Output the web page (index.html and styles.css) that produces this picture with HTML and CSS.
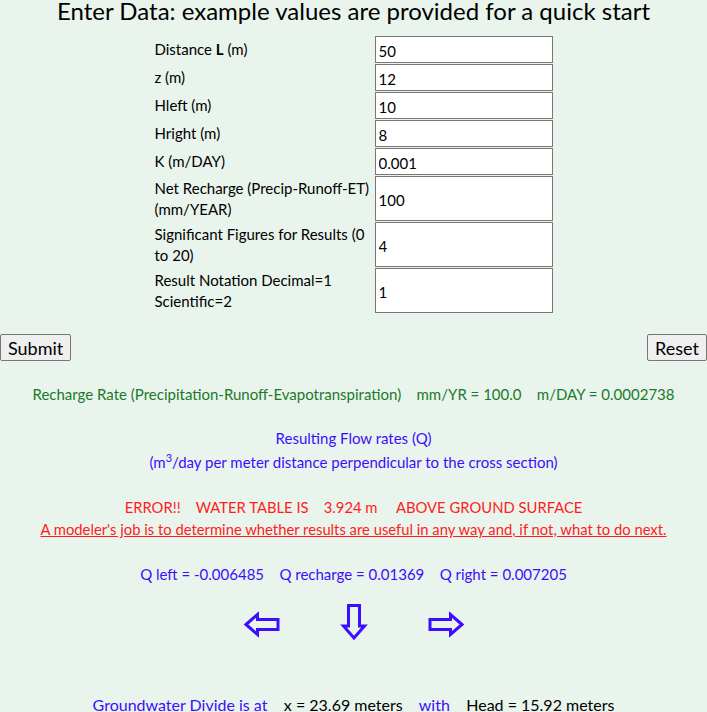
FILE: index.html
```html
<!DOCTYPE html>
<html>
<head>
<meta charset="utf-8">
<link rel="stylesheet" href="styles.css">
</head>
<body>
<h1 class="title">Enter Data: example values are provided for a quick start</h1>
<form class="form">
<table class="inputs">
<tr><td class="label">Distance <b>L</b> (m)</td><td><input class="field" value="50"></td></tr>
<tr><td class="label">z (m)</td><td><input class="field" value="12"></td></tr>
<tr><td class="label">Hleft (m)</td><td><input class="field" value="10"></td></tr>
<tr><td class="label">Hright (m)</td><td><input class="field" value="8"></td></tr>
<tr><td class="label">K (m/DAY)</td><td><input class="field" value="0.001"></td></tr>
<tr><td class="label">Net Recharge (Precip-Runoff-ET) (mm/YEAR)</td><td><input class="field tall" value="100"></td></tr>
<tr><td class="label">Significant Figures for Results (0 to 20)</td><td><input class="field tall" value="4"></td></tr>
<tr><td class="label">Result Notation Decimal=1 Scientific=2</td><td><input class="field tall" value="1"></td></tr>
</table>
<div class="buttons">
<button type="button" class="btn">Submit</button>
<button type="button" class="btn">Reset</button>
</div>
</form>
<div class="results">
<p class="green line-recharge">Recharge Rate (Precipitation-Runoff-Evapotranspiration)&nbsp;&nbsp;&nbsp; mm/YR = 100.0&nbsp;&nbsp;&nbsp; m/DAY = 0.0002738</p>
<p class="blue line-flow">Resulting Flow rates (Q)<br>(m<sup>3</sup>/day per meter distance perpendicular to the cross section)</p>
<p class="red line-error">ERROR!!&nbsp;&nbsp;&nbsp; WATER TABLE IS&nbsp;&nbsp;&nbsp; 3.924 m&nbsp;&nbsp;&nbsp;&nbsp; ABOVE GROUND SURFACE<br><u>A modeler's job is to determine whether results are useful in any way and, if not, what to do next.</u></p>
<p class="blue line-q">Q left = -0.006485&nbsp;&nbsp;&nbsp; Q recharge = 0.01369&nbsp;&nbsp;&nbsp; Q right = 0.007205</p>
<div class="arrows">
<span class="arrow"><svg width="40" height="40" viewBox="0 0 40 40"><polygon points="4,24.5 15.5,14.5 15.5,19.5 36,19.5 36,29.5 15.5,29.5 15.5,34.5" fill="none" stroke="#3d0dff" stroke-width="3"/></svg></span>
<span class="arrow"><svg width="40" height="40" viewBox="0 0 40 40"><polygon points="14.5,5.5 25.5,5.5 25.5,26 30.5,26 20,38 9.5,26 14.5,26" fill="none" stroke="#3d0dff" stroke-width="3"/></svg></span>
<span class="arrow"><svg width="40" height="40" viewBox="0 0 40 40"><polygon points="36,24.5 24.5,14.5 24.5,19.5 4,19.5 4,29.5 24.5,29.5 24.5,34.5" fill="none" stroke="#3d0dff" stroke-width="3"/></svg></span>
</div>
<p class="line-divide"><span class="blue">Groundwater Divide is at</span>&nbsp;&nbsp;&nbsp; x = 23.69 meters&nbsp;&nbsp;&nbsp; <span class="blue">with</span>&nbsp;&nbsp;&nbsp; Head = 15.92 meters</p>
</div>
</body>
</html>
```
FILE: styles.css
```css
html { background: #e9f4ec; }
body {
  margin: 0;
  font-family: Lato, "Open Sans", sans-serif;
  color: #000;
}
.title {
  margin: 0;
  padding-top: 1px;
  text-align: center;
  font-weight: normal;
  font-size: 24px;
  line-height: 20px;
  height: 34px;
}
.form { margin: 0; }
.inputs {
  margin: 0 auto;
  border-spacing: 2px 1px;
  border-collapse: separate;
}
.label {
  width: 218px;
  font-size: 15px;
  line-height: 21px;
  vertical-align: middle;
}
.inputs td { padding: 0; }
.field {
  box-sizing: border-box;
  width: 178px;
  height: 27px;
  margin: 0;
  border: 1px solid #777;
  background: #fff;
  font-family: Lato, sans-serif;
  font-size: 15px;
  padding: 2px 3px 0;
  display: block;
}
.field.tall { height: 45px; }
.buttons {
  display: flex;
  justify-content: space-between;
  margin-top: 20px;
}
.btn {
  font-family: Lato, sans-serif;
  font-size: 18px;
  height: 27px;
  padding: 0 7px;
  border: 1px solid #777;
  border-radius: 2px;
  background: #efefef;
  color: #000;
}
.results { text-align: center; font-size: 15px; }
.results p { margin: 0; line-height: 24px; }
.green { color: #1a7a2a; }
.blue { color: #3d0dff; }
.red { color: #ff1c1c; }
.line-recharge { margin-top: 21px !important; }
.line-flow { margin-top: 20px !important; }
.line-flow sup { font-size: 11px; line-height: 0; }
.line-error { margin-top: 22px !important; line-height: 22px !important; font-size: 14.8px; }
.line-q { margin-top: 22px !important; }
.arrows {
  display: flex;
  justify-content: center;
  margin-top: 14px;
  height: 40px;
}
.arrow {
  width: 92px;
  display: flex;
  justify-content: center;
}
.line-divide { margin-top: 53px !important; font-size: 16px; }
```
